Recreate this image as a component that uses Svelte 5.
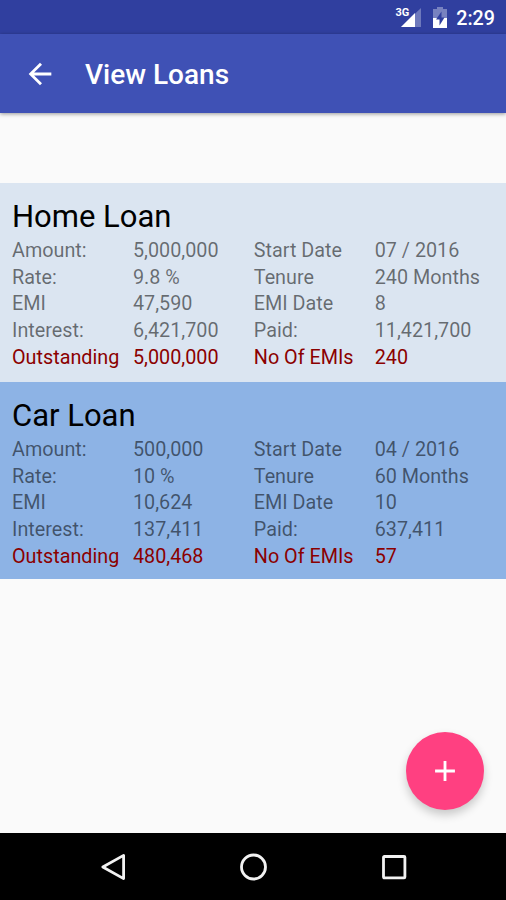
<script>
  const loans = [
    {
      name: 'Home Loan',
      tone: 'pale',
      rows: [
        ['Amount:', '5,000,000', 'Start Date', '07 / 2016'],
        ['Rate:', '9.8 %', 'Tenure', '240 Months'],
        ['EMI', '47,590', 'EMI Date', '8'],
        ['Interest:', '6,421,700', 'Paid:', '11,421,700'],
        ['Outstanding', '5,000,000', 'No Of EMIs', '240']
      ]
    },
    {
      name: 'Car Loan',
      tone: 'blue',
      rows: [
        ['Amount:', '500,000', 'Start Date', '04 / 2016'],
        ['Rate:', '10 %', 'Tenure', '60 Months'],
        ['EMI', '10,624', 'EMI Date', '10'],
        ['Interest:', '137,411', 'Paid:', '637,411'],
        ['Outstanding', '480,468', 'No Of EMIs', '57']
      ]
    }
  ];
</script>

<div class="screen">
  <div class="status">
    <span class="network">3G</span>
    <svg class="signal" width="20" height="20" viewBox="0 0 20 20" aria-hidden="true">
      <path d="M0 20 20 1V20Z" fill="#fff" opacity=".3" />
      <path d="M0 20 14 6V20Z" fill="#fff" />
    </svg>
    <svg class="battery" width="14" height="21" viewBox="0 0 14 21" aria-hidden="true">
      <path d="M0 2H4V0H10V2H14V11H0Z" fill="#fff" opacity=".35" />
      <path d="M0 11H14V21H0Z" fill="#fff" />
      <path d="M8.5 4.5 3 12.5H6.5V18.5L11.5 10.5H8.5Z" fill="#303f9f" />
    </svg>
    <span class="clock">2:29</span>
  </div>
  <header>
    <svg width="34" height="34" viewBox="0 0 24 24" aria-hidden="true">
      <path d="M20 11H7.83l5.59-5.59L12 4l-8 8 8 8 1.41-1.41L7.83 13H20z" fill="#fff" />
    </svg>
    <h1>View Loans</h1>
  </header>
  <main>
    {#each loans as loan}
      <section class={loan.tone}>
        <h2>{loan.name}</h2>
        {#each loan.rows as row, i}
          <div class="row" class:due={i === 4}>
            {#each row as cell}<span>{cell}</span>{/each}
          </div>
        {/each}
      </section>
    {/each}
    <button class="fab" aria-label="Add loan">
      <svg width="34" height="34" viewBox="0 0 24 24" aria-hidden="true">
        <path d="M19 13h-6v6h-2v-6H5v-2h6V5h2v6h6v2z" fill="#fff" />
      </svg>
    </button>
  </main>
  <nav>
    <svg width="28" height="30" viewBox="0 0 28 30" aria-hidden="true">
      <path d="M3.8 15 24.6 3.4V26.6Z" />
    </svg>
    <svg width="28" height="30" viewBox="0 0 28 30" aria-hidden="true">
      <circle cx="13.5" cy="15" r="12" />
    </svg>
    <svg width="28" height="30" viewBox="0 0 28 30" aria-hidden="true">
      <rect x="3.5" y="4.5" width="21.4" height="21.4" rx=".8" />
    </svg>
  </nav>
</div>

<style>
  .screen {
    width: 506px;
    height: 900px;
    display: flex;
    flex-direction: column;
    background: #fafafa;
    font-family: Roboto, "Liberation Sans", sans-serif;
    overflow: hidden;
  }
  .status {
    height: 34px;
    flex: none;
    box-sizing: border-box;
    padding: 7px 11px 0 0;
    display: flex;
    justify-content: flex-end;
    align-items: flex-start;
    background: #303f9f;
    color: #fff;
  }
  .network {
    font-size: 11px;
    line-height: 11px;
    font-weight: 700;
    margin-right: -8px;
  }
  .signal { margin-right: 12px; }
  .battery { margin-right: 9px; }
  .clock {
    font-size: 19.7px;
    line-height: 23px;
    font-weight: 500;
  }
  header {
    height: 79px;
    flex: none;
    box-sizing: border-box;
    padding: 0 0 0 23px;
    display: flex;
    align-items: center;
    background: #3f51b5;
    box-shadow: 0 1px 4px rgba(0, 0, 0, .4);
    color: #fff;
  }
  h1 {
    margin: 3px 0 0 28px;
    font-size: 28px;
    line-height: 34px;
    font-weight: 500;
  }
  main {
    position: relative;
    flex: 1;
    padding-top: 70px;
  }
  section {
    box-sizing: border-box;
    height: 199px;
    padding: 14px 12px 0;
  }
  .pale { background: #dbe5f1; }
  .blue {
    height: 197px;
    background: #8db3e5;
  }
  h2 {
    margin: 0;
    color: #000;
    font-size: 31px;
    line-height: 39px;
    font-weight: 400;
    padding-bottom: 2px;
  }
  .row {
    display: grid;
    grid-template-columns: repeat(4, 120.9px);
    height: 26.7px;
    line-height: 26.7px;
    font-size: 19.8px;
    color: rgba(0, 0, 0, .54);
    white-space: nowrap;
  }
  .due { color: #8b0000; }
  .fab {
    position: absolute;
    right: 22px;
    bottom: 23px;
    width: 78px;
    height: 78px;
    padding: 0;
    border: 0;
    border-radius: 50%;
    display: flex;
    align-items: center;
    justify-content: center;
    background: #ff4081;
    box-shadow: 0 5px 10px rgba(0, 0, 0, .2);
  }
  nav {
    height: 67px;
    flex: none;
    box-sizing: border-box;
    padding: 19px 98px 0 99px;
    display: flex;
    justify-content: space-between;
    background: #000;
  }
  nav svg {
    fill: none;
    stroke: #f2f2f2;
    stroke-width: 2.8;
    stroke-linejoin: round;
  }
</style>
